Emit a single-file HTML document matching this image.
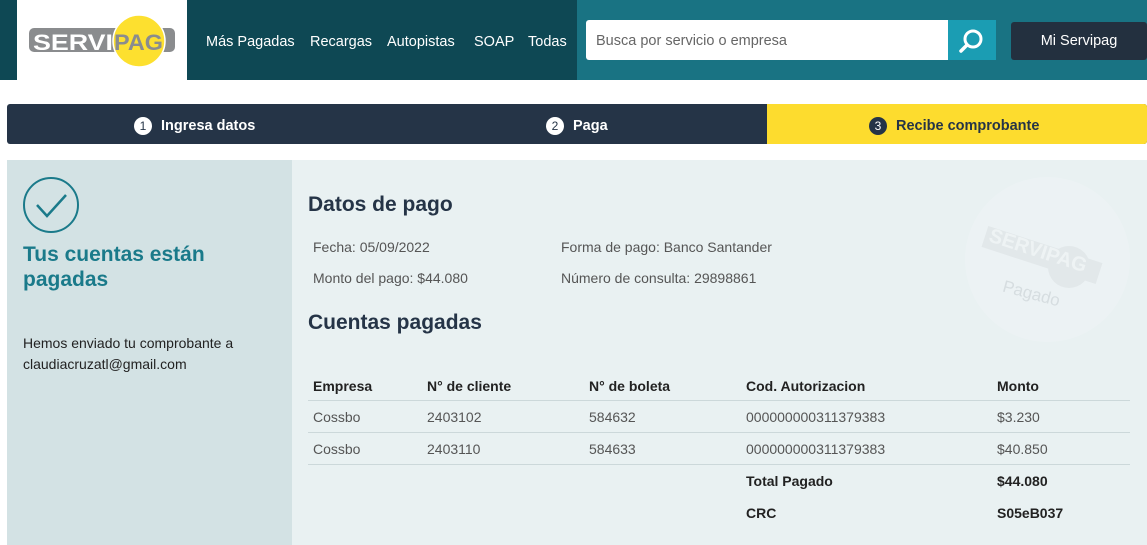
<!DOCTYPE html>
<html><head><meta charset="utf-8"><style>
*{margin:0;padding:0;box-sizing:border-box}
body{width:1147px;height:545px;overflow:hidden;background:#fff;font-family:"Liberation Sans",sans-serif;position:relative}
.a{position:absolute}
.hdr{left:0;top:0;width:577px;height:80px;background:#0e4854}
.hdr2{left:577px;top:0;width:570px;height:80px;background:#197383}
.logo{left:17px;top:0;width:170px;height:80px;background:#fff}
.nav{top:34px;color:#fff;font-size:14.5px}
.steps{left:7px;top:104px;width:1140px;height:40px;background:#253447;border-radius:3px}
.st{top:116px;font-size:14.5px;font-weight:bold;color:#fff;display:flex;align-items:center}
.st i{display:inline-block;width:18px;height:18px;border-radius:50%;background:#fff;color:#253447;font-style:normal;font-size:12px;text-align:center;line-height:18px;margin-right:9px;font-weight:normal}
.t{color:#555;font-size:14px}
.th{color:#222;font-size:14px;font-weight:bold}
.hr{height:1px;background:#ccd8da}
</style></head><body>
<div class="a hdr"></div><div class="a hdr2"></div>
<div class="a logo"></div>
<svg class="a" style="left:17px;top:0" width="170" height="80" viewBox="0 0 170 80">
<rect x="12" y="28" width="146" height="24" rx="5" fill="#8a8c8e"/>
<circle cx="122" cy="41" r="26" fill="#fde02f" stroke="#fff" stroke-width="1.5"/>
<text x="16" y="50" font-family="Liberation Sans" font-weight="bold" font-size="22" fill="#fff" textLength="80" lengthAdjust="spacingAndGlyphs">SERVI</text>
<text x="97" y="50" font-family="Liberation Sans" font-weight="bold" font-size="22" fill="#8a8c8e" textLength="49" lengthAdjust="spacingAndGlyphs">PAG</text>
</svg>
<div class="a nav" style="left:206px">Más Pagadas</div>
<div class="a nav" style="left:310px">Recargas</div>
<div class="a nav" style="left:387px">Autopistas</div>
<div class="a nav" style="left:474px">SOAP</div>
<div class="a nav" style="left:528px">Todas</div>
<div class="a" style="left:586px;top:20px;width:362px;height:40px;background:#fff;border-radius:3px 0 0 3px;color:#666;font-size:14.5px;padding:13px 10px">Busca por servicio o empresa</div>
<div class="a" style="left:948px;top:20px;width:48px;height:40px;background:#1b9db3"></div>
<svg class="a" style="left:958px;top:27px" width="28" height="28" viewBox="0 0 28 28"><circle cx="15" cy="12" r="8" fill="none" stroke="#fff" stroke-width="3"/><line x1="9" y1="18" x2="3" y2="24" stroke="#fff" stroke-width="3.5" stroke-linecap="round"/></svg>
<div class="a" style="left:1011px;top:22px;width:136px;height:38px;background:#23303f;border-radius:3px;color:#fff;font-size:14.5px;text-align:center;line-height:38px">Mi Servipag</div>
<div class="a steps"></div>
<div class="a" style="left:767px;top:104px;width:380px;height:40px;background:#fddc2e;border-radius:0 3px 3px 0"></div>
<div class="a st" style="left:134px;top:117px"><i>1</i>Ingresa datos</div>
<div class="a st" style="left:546px;top:117px"><i>2</i>Paga</div>
<div class="a st" style="left:869px;top:117px;color:#253447"><i style="background:#253447;color:#fff">3</i>Recibe comprobante</div>
<div class="a" style="left:7px;top:160px;width:285px;height:385px;background:#d3e2e4"></div>
<div class="a" style="left:292px;top:160px;width:855px;height:385px;background:#e9f1f2"></div>
<svg class="a" style="left:22px;top:176px" width="58" height="58" viewBox="0 0 58 58"><circle cx="29" cy="29" r="27" fill="none" stroke="#1a7a8a" stroke-width="2"/><polyline points="15,29 25,40 44,19" fill="none" stroke="#1a7a8a" stroke-width="2.5"/></svg>
<div class="a" style="left:23px;top:242px;color:#1a7a8a;font-size:21px;font-weight:bold;line-height:25px">Tus cuentas están<br>pagadas</div>
<div class="a" style="left:23px;top:333px;color:#222;font-size:14px;line-height:21px">Hemos enviado tu comprobante a<br>claudiacruzatl@gmail.com</div>
<div class="a" style="left:965px;top:177px;width:165px;height:165px;border-radius:50%;background:#ecf2f4"></div>
<div class="a" style="left:1002px;top:284px;color:#d6dde0;font-size:17px;transform:rotate(15deg)">Pagado</div>
<div class="a" style="left:982px;top:244px;width:120px;height:22px;background:#e2e8ea;transform:rotate(18deg)"></div>
<div class="a" style="left:1048px;top:246px;width:42px;height:42px;border-radius:50%;background:#e2e8ea"></div>
<div class="a" style="left:987px;top:240px;color:#eef3f4;font-size:20px;font-weight:bold;transform:rotate(18deg)">SERVIPAG</div>
<div class="a" style="left:308px;top:193px;color:#253447;font-size:21px;font-weight:bold">Datos de pago</div>
<div class="a t" style="left:313px;top:239px">Fecha: 05/09/2022</div>
<div class="a t" style="left:313px;top:270px">Monto del pago: $44.080</div>
<div class="a t" style="left:561px;top:239px">Forma de pago: Banco Santander</div>
<div class="a t" style="left:561px;top:270px">Número de consulta: 29898861</div>
<div class="a" style="left:308px;top:311px;color:#253447;font-size:21px;font-weight:bold">Cuentas pagadas</div>
<div class="a th" style="left:313px;top:378px">Empresa</div>
<div class="a th" style="left:427px;top:378px">N° de cliente</div>
<div class="a th" style="left:589px;top:378px">N° de boleta</div>
<div class="a th" style="left:746px;top:378px">Cod. Autorizacion</div>
<div class="a th" style="left:997px;top:378px">Monto</div>
<div class="a hr" style="left:308px;top:400px;width:822px"></div>
<div class="a t" style="left:313px;top:409px">Cossbo</div><div class="a t" style="left:427px;top:409px">2403102</div><div class="a t" style="left:589px;top:409px">584632</div><div class="a t" style="left:746px;top:409px">000000000311379383</div><div class="a t" style="left:997px;top:409px">$3.230</div>
<div class="a hr" style="left:308px;top:432px;width:822px"></div>
<div class="a t" style="left:313px;top:441px">Cossbo</div><div class="a t" style="left:427px;top:441px">2403110</div><div class="a t" style="left:589px;top:441px">584633</div><div class="a t" style="left:746px;top:441px">000000000311379383</div><div class="a t" style="left:997px;top:441px">$40.850</div>
<div class="a hr" style="left:308px;top:464px;width:822px"></div>
<div class="a th" style="left:746px;top:473px">Total Pagado</div><div class="a th" style="left:997px;top:473px">$44.080</div>
<div class="a th" style="left:746px;top:505px">CRC</div><div class="a th" style="left:997px;top:505px">S05eB037</div>
</body></html>
